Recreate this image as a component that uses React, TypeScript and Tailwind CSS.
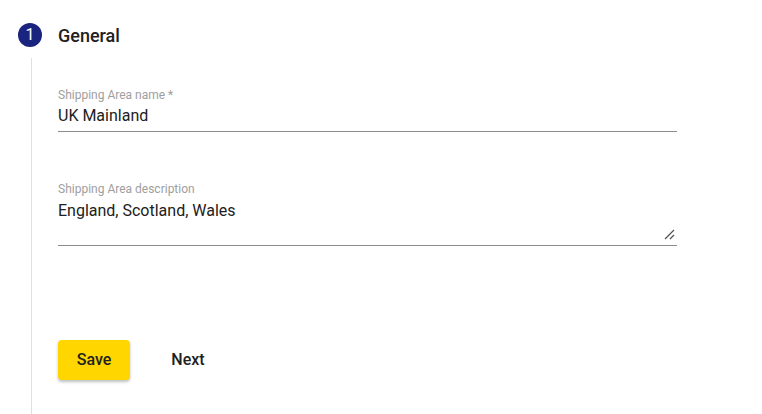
import React from 'react';

function Field({ label, value, multiline }: { label: string; value: string; multiline?: boolean }) {
    return (
        <div className="relative w-[619px] border-b border-[#8c8c8c]">
            <div className="text-[12px] leading-[14px] text-[#9e9e9e]">{label}</div>
            <div className={`text-[16px] leading-[20px] text-[#212121] ${multiline ? 'mt-[5px] h-[44px]' : 'mt-[4px] h-[25px]'}`}>{value}</div>
            {multiline && (
                <svg className="absolute right-[2px] bottom-[5px]" width="12" height="12" viewBox="0 0 12 12">
                    <path d="M2 11 L11 2 M7 11 L11 7" stroke="#555" strokeWidth="1.3" fill="none" />
                </svg>
            )}
        </div>
    );
}

export default function App() {
    return (
        <div className="w-[762px] h-[414px] bg-white overflow-hidden" style={{ fontFamily: 'Roboto, "Liberation Sans", sans-serif' }}>
            <div className="flex items-center h-[58px] pl-[18px] pt-[12px]">
                <div className="w-[24px] h-[24px] rounded-full bg-[#1a237e] text-white text-[16px] flex items-center justify-center">1</div>
                <div className="ml-[16px] text-[18px] font-medium text-[#212121]">General</div>
            </div>
            <div className="ml-[31px] border-l border-[#e0e0e0] pl-[26px] pt-[30px] h-[356px]">
                <Field label="Shipping Area name *" value="UK Mainland" />
                <div className="h-[50px]" />
                <Field label="Shipping Area description" value="England, Scotland, Wales" multiline />
                <div className="flex items-center mt-[94px] gap-[22px]">
                    <button className="h-[40px] w-[72px] rounded-[4px] bg-[#ffd600] text-[16px] font-medium text-[#212121] shadow-[0_2px_3px_rgba(0,0,0,0.25)]">Save</button>
                    <button className="h-[40px] w-[72px] text-[16px] font-medium text-[#212121]">Next</button>
                </div>
            </div>
        </div>
    );
}
